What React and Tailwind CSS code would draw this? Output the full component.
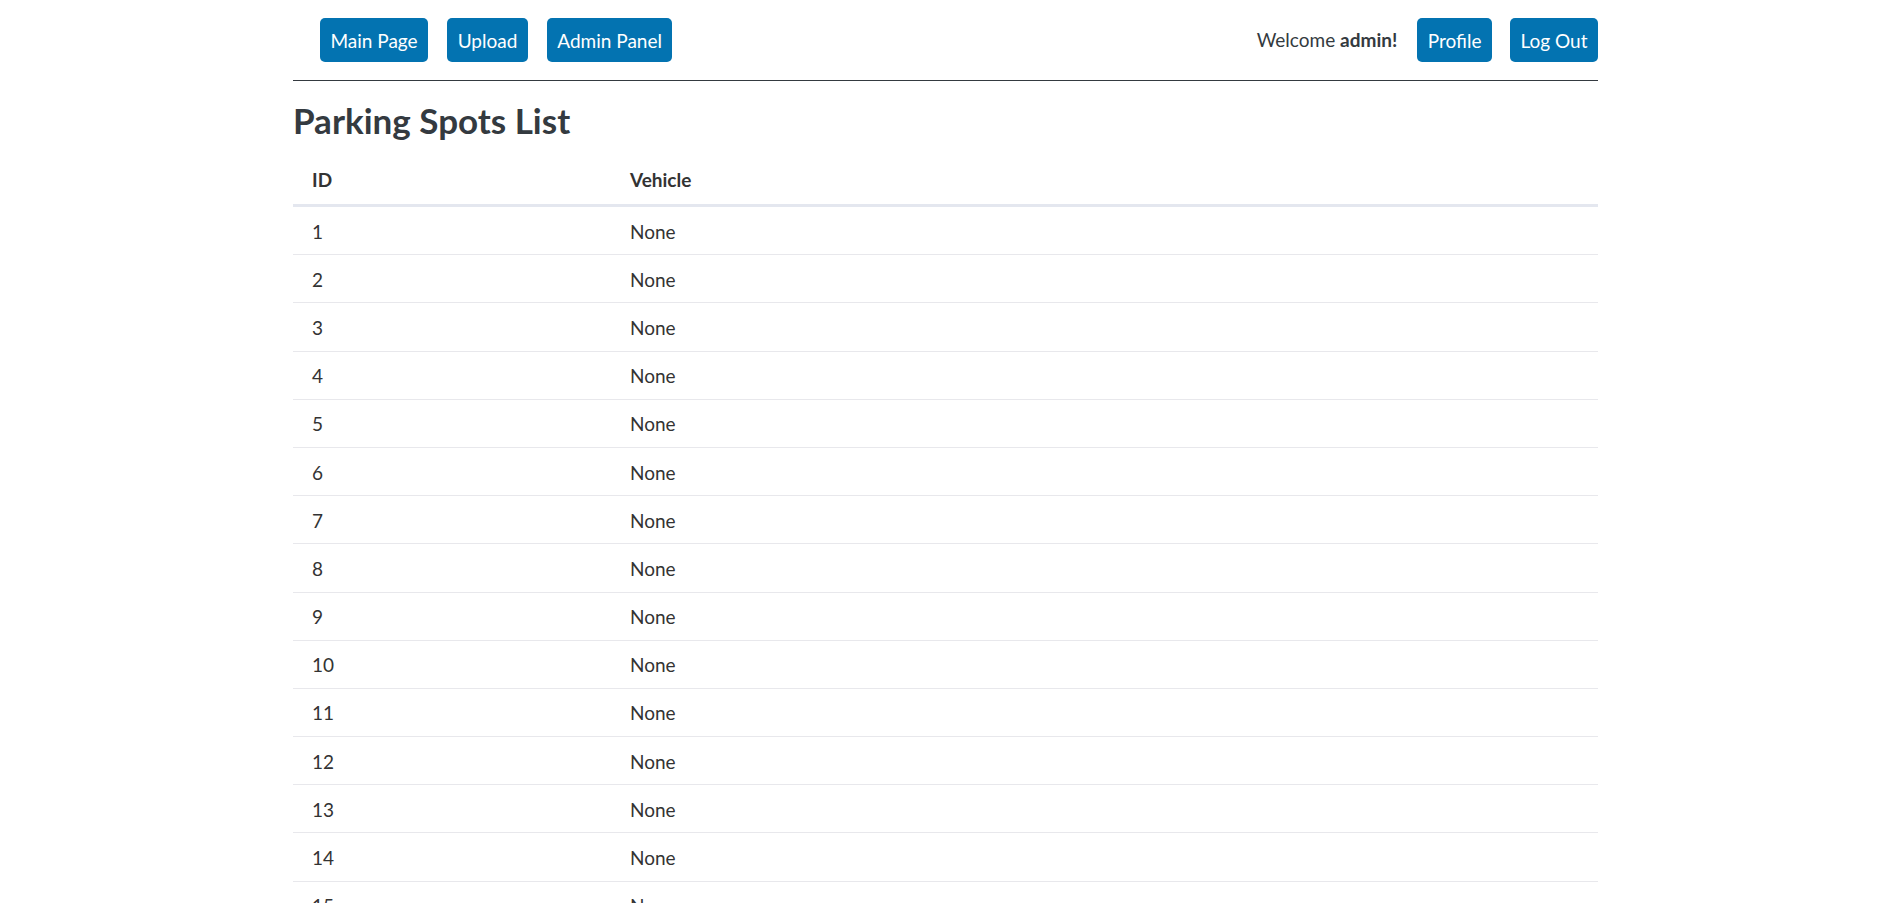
import React from "react";

const spots = Array.from({ length: 20 }, (_, i) => ({ id: i + 1, vehicle: "None" }));

const NavButton = ({ children }) => (
  <button className="h-[44px] px-[10.5px] rounded-[5px] bg-[#0373b1] text-white text-[19px] leading-none">
    {children}
  </button>
);

export default function App() {
  return (
    <div className="min-h-screen bg-white font-['Lato',sans-serif] text-[#343a40]">
      <div className="ml-[293px] w-[1305px]">
        {/* верхна навигация */}
        <nav className="flex items-center justify-between py-[18px] border-b border-[#343a40]">
          <div className="flex gap-[19px] pl-[27px]">
            <NavButton>Main Page</NavButton>
            <NavButton>Upload</NavButton>
            <NavButton>Admin Panel</NavButton>
          </div>
          <div className="flex items-center">
            <span className="text-[19px] mr-[20px]">
              Welcome <b>admin!</b>
            </span>
            <div className="flex gap-[18px]">
              <NavButton>Profile</NavButton>
              <NavButton>Log Out</NavButton>
            </div>
          </div>
        </nav>

        <h2 className="mt-[18px] text-[35px] font-bold leading-[42px] text-[#343a40]">
          Parking Spots List
        </h2>

        <table className="mt-[15px] w-full border-separate border-spacing-0 text-[19px] text-[#333]">
          <thead>
            <tr>
              <th className="w-[318px] px-[19px] pt-[9.5px] pb-[10.5px] leading-[28px] text-left font-bold border-b-[3px] border-[#e4e7ef]">
                ID
              </th>
              <th className="px-[19px] pt-[9.5px] pb-[10.5px] leading-[28px] text-left font-bold border-b-[3px] border-[#e4e7ef]">
                Vehicle
              </th>
            </tr>
          </thead>
          <tbody>
            {spots.map((s) => (
              <tr key={s.id}>
                <td className="px-[19px] pt-[10.6px] pb-[8.6px] leading-[28px] border-b border-[#e8e8ec]">{s.id}</td>
                <td className="px-[19px] pt-[10.6px] pb-[8.6px] leading-[28px] border-b border-[#e8e8ec]">{s.vehicle}</td>
              </tr>
            ))}
          </tbody>
        </table>
      </div>
    </div>
  );
}
